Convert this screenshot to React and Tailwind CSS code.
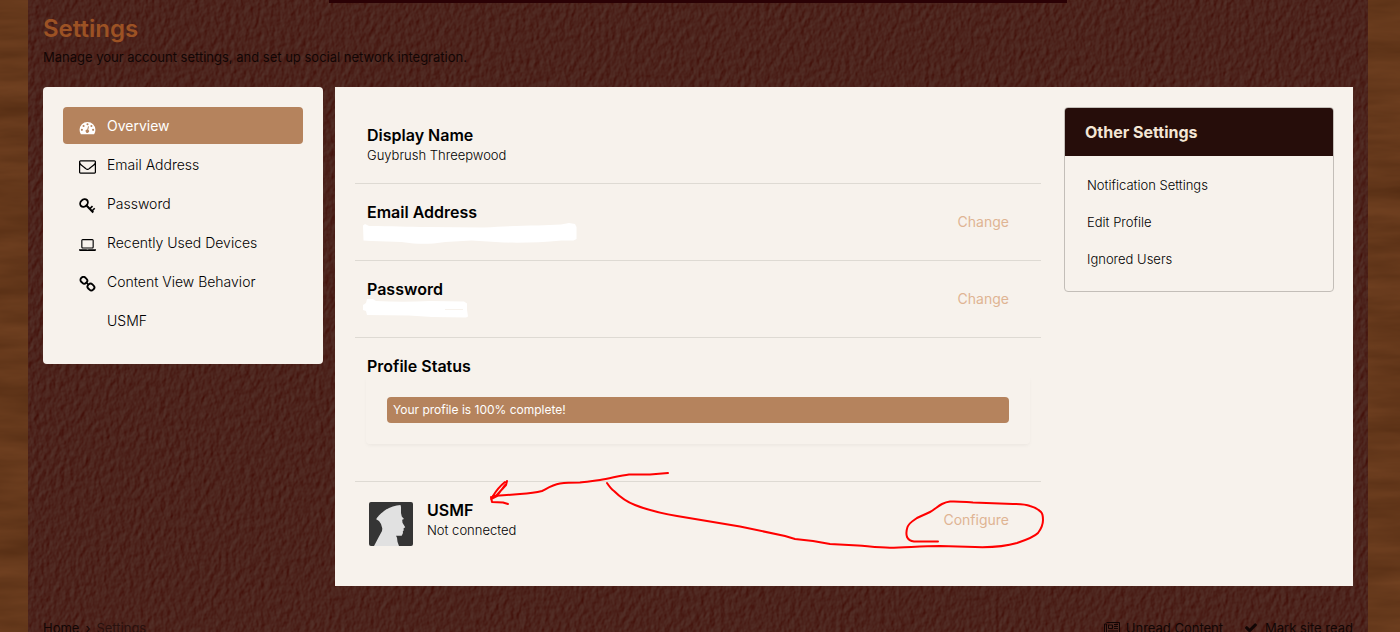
import clsx from 'clsx';

const DashboardIcon = () => (
  <svg viewBox="0 0 18 15" className="w-[17px] h-[14px]" fill="currentColor" fillRule="evenodd">
    <path d="M9 1a8.500 8.500 0 0 1 8.500 8.500c0 1.600-.5 3.200-1.300 4.500-.1.200-.3.300-.6.300H2.400c-.3 0-.5-.1-.6-.3A8.500 8.500 0 0 1 .5 9.500 8.500 8.500 0 0 1 9 1zM3 8.400a1.100 1.100 0 1 0 0 2.200 1.100 1.100 0 0 0 0-2.200zm1.800-4.200a1.100 1.100 0 1 0 0 2.200 1.100 1.100 0 0 0 0-2.200zM9 2.400a1.100 1.100 0 1 0 0 2.200 1.100 1.100 0 0 0 0-2.200zm4.200 1.800a1.100 1.100 0 1 0 0 2.200 1.100 1.100 0 0 0 0-2.200zM15 8.400a1.100 1.100 0 1 0 0 2.200 1.100 1.100 0 0 0 0-2.200zM9.500 5.900l-.8 3.200a1.800 1.800 0 1 0 1.100.3l.7-3.200a.5.5 0 0 0-1-.3z" />
  </svg>
);

const EnvelopeIcon = () => (
  <svg viewBox="0 256 1792 1408" className="w-[17px] h-[14px]" fill="currentColor">
    <path d="M1664 1504v-768q-32 36-69 66-268 206-426 338-51 43-83 67t-86.500 48.500-102.500 24.500h-2q-48 0-102.500-24.500t-86.500-48.500-83-67q-158-132-426-338-37-30-69-66v768q0 13 9.500 22.500t22.500 9.500h1472q13 0 22.500-9.500t9.500-22.500zm0-1051v-24.500l-.5-13-3-12.500-5.500-9-9-7.500-14-2.500h-1472q-13 0-22.500 9.500t-9.500 22.500q0 168 147 284 193 152 401 317 6 5 35 29.500t46 37.500 44.500 31.500 50.500 27.500 43 9h2q20 0 43-9t50.500-27.500 44.500-31.500 46-37.500 35-29.500q208-165 401-317 54-43 100.500-115.500t46.500-131.500zm128-37v1088q0 66-47 113t-113 47h-1472q-66 0-113-47t-47-113v-1088q0-66 47-113t113-47h1472q66 0 113 47t47 113z" />
  </svg>
);

const KeyIcon = () => (
  <svg viewBox="0 0 17 16" className="w-[17px] h-4" fill="none" stroke="currentColor">
    <ellipse cx="5" cy="5" rx="4.200" ry="3.400" strokeWidth="1.900" transform="rotate(-45 5 5)" />
    <path d="M7.500 7.500l6.800 7" strokeWidth="2" />
    <path d="M10.800 10.800l2.700-2.700M13 13l2.700-2.700" strokeWidth="1.600" />
  </svg>
);

const LaptopIcon = () => (
  <svg viewBox="0 128 1920 1280" className="w-[17px] h-3" fill="currentColor" preserveAspectRatio="none">
    <path d="M416 1152q-66 0-113-47t-47-113v-704q0-66 47-113t113-47h1088q66 0 113 47t47 113v704q0 66-47 113t-113 47h-1088zm-32-864v704q0 13 9.500 22.500t22.500 9.500h1088q13 0 22.500-9.500t9.500-22.500v-704q0-13-9.500-22.500t-22.500-9.500h-1088q-13 0-22.500 9.500t-9.500 22.500zm1376 928h160v96q0 40-47 68t-113 28h-1600q-66 0-113-28t-47-68v-96h1760zm-720 96q16 0 16-16t-16-16h-160q-16 0-16 16t16 16h160z" />
  </svg>
);

const ChainIcon = () => (
  <svg viewBox="0 0 17 16" className="w-[17px] h-4" fill="none" stroke="currentColor" strokeWidth="1.900">
    <rect x="1.400" y="1.400" width="6.900" height="5.800" rx="2.600" transform="rotate(45 4.900 4.300)" />
    <rect x="8.500" y="8.100" width="6.900" height="5.800" rx="2.600" transform="rotate(45 11.900 11)" />
    <path d="M6.800 6l3 3" strokeWidth="1.700" />
  </svg>
);

const NewspaperIcon = () => (
  <svg viewBox="0 0 16 12" className="w-4 h-3" fill="none" stroke="currentColor">
    <path d="M2.500 .5h13v11h-14q-1 0-1-1v-8.500h2v8.500q0 1-1 1" />
    <path d="M4.500 3h4v3.500h-4zM10 2.500h4M10 4.500h4M10 6.500h4M4 9h10" />
  </svg>
);

const CheckIcon = () => (
  <svg viewBox="121 343 1550 1200" className="w-3 h-[10px]" fill="currentColor">
    <path d="M1671 566q0 40-28 68l-724 724-136 136q-28 28-68 28t-68-28l-136-136-362-362q-28-28-28-68t28-68l136-136q28-28 68-28t68 28l294 295 656-657q28-28 68-28t68 28l136 136q28 28 28 68z" />
  </svg>
);

const SoldierAvatar = () => (
  <svg viewBox="0 0 44 44" className="w-11 h-11 rounded-xs shrink-0 mt-0.5" role="img" aria-label="USMF">
    <rect width="44" height="44" fill="#353535" />
    <path
      fill="#e1e1e1"
      d="M5 44L10 34.500 13 29l.3-2.500L12 22l-2-3-2.800-1.800C8 15.500 11 12 15 9c5-3.700 11-5.700 16.500-6l.5 2v6l.8 3.500L35 17l-1.800.8.3 3 2.700 4.400-1.700 1.300.3 1.800-1 1.200.2 1.500-1.300 2.800H27l1 2 .5 4 1.500 4.200z"
    />
  </svg>
);

// Procedural textures behind the page
const WoodTexture = () => (
  <svg className="absolute inset-0 w-full h-full" aria-hidden="true">
    <filter id="wood" x="0" y="0" width="100%" height="100%" colorInterpolationFilters="sRGB">
      <feTurbulence type="fractalNoise" baseFrequency="0.008 0.05" numOctaves="4" seed="8" />
      <feColorMatrix values="0.14 0 0 0 0.325  0.10 0 0 0 0.170  0.07 0 0 0 0.070  0 0 0 0 1" />
    </filter>
    <rect width="100%" height="100%" filter="url(#wood)" />
  </svg>
);

const LeatherTexture = () => (
  <svg className="absolute inset-0 w-full h-full" aria-hidden="true">
    <filter id="leather" x="0" y="0" width="100%" height="100%" colorInterpolationFilters="sRGB">
      <feTurbulence type="fractalNoise" baseFrequency="0.2 0.13" numOctaves="3" seed="5" result="grain" />
      <feDiffuseLighting in="grain" surfaceScale="0.9" lightingColor="#ffffff" result="lit">
        <feDistantLight azimuth="215" elevation="45" />
      </feDiffuseLighting>
      <feColorMatrix in="lit" values="0.14 0 0 0 0.200  0.28 0 0 0 -0.058  0.27 0 0 0 -0.080  0 0 0 0 1" />
    </filter>
    <rect width="100%" height="100%" filter="url(#leather)" />
  </svg>
);

const navItems = [
  { label: 'Overview', icon: DashboardIcon, active: true },
  { label: 'Email Address', icon: EnvelopeIcon },
  { label: 'Password', icon: KeyIcon },
  { label: 'Recently Used Devices', icon: LaptopIcon },
  { label: 'Content View Behavior', icon: ChainIcon },
  { label: 'USMF' },
];

const otherSettings = ['Notification Settings', 'Edit Profile', 'Ignored Users'];

const SideNav = () => (
  <nav className="w-[280px] shrink-0 rounded bg-[#f7f2ec] p-5 pb-[25px]">
    <ul className="flex flex-col gap-0.5">
      {navItems.map(({ label, icon: Icon, active }) => (
        <li key={label}>
          <a
            href="#"
            className={clsx(
              'flex h-[37px] items-center gap-[11px] rounded px-4 text-sm',
              active ? 'bg-[#b5835d] font-normal text-white' : 'text-black'
            )}
          >
            <span className="flex w-[17px] justify-center pt-1">{Icon && <Icon />}</span>
            {label}
          </a>
        </li>
      ))}
    </ul>
  </nav>
);

const SettingRow = ({ title, children, action }) => (
  <li className="flex justify-between border-b border-[#dedad3] px-3 py-[18px]">
    <div>
      <h3 className="text-base leading-5 font-semibold text-black">{title}</h3>
      {children}
    </div>
    {action && <button className="px-5 text-sm leading-10 font-normal text-[#dfb493]">{action}</button>}
  </li>
);

const Annotations = () => (
  <svg
    className="pointer-events-none absolute top-0 left-0 h-[499px] w-[720px]"
    viewBox="335 87 720 499"
    fill="none"
    stroke="#ff0000"
    strokeWidth="2"
    strokeLinecap="round"
    strokeLinejoin="round"
    aria-hidden="true"
  >
    <path d="M668 473l-18 1.500h-21c-9 1-19 4-29 5.500-7 1-14 1.500-20 2.500-9 0-15 .3-20 1-8 1.500-13 5-18 7.500-8 2-15 2.500-22 3l-27 2" />
    <path d="M507 481l-1 4-11 12M505 482c-5 4-9 9-12 14l-2 3 6-3 8-11M491 497l1 5 11 .5 5 1.500" />
    <path d="M607 483C609 486 611 489 614 491C620 497 627 502 635 505C647 510 660 513 677 516L740 526.500L785 536L795 539L813 541L830 544L858 545.500C870 546.500 880 547.800 890 547.800C905 547.800 920 546 940 546L975 547C990 547.500 1005 546.500 1017 543C1026 540 1034 537 1038 533C1041 529 1043 525 1043 520C1043 517 1043 514 1041 512C1038 509 1034 507 1030 506C1025 504 1019 504 1013 504L973 502.500C965 502 958 501 950 501.500C946 502 944 503 942 504C938 506 934 510 930 512C926 514 921 516 917 518C913 521 909 523 907.500 527C906.500 530 906 534 907 537C908 539 910 541 914 541.500H938" />
  </svg>
);

const AccountOverview = () => (
  <ul className="min-w-0 flex-1">
    <SettingRow title="Display Name">
      <p className="text-[13px] leading-5 text-black">Guybrush Threepwood</p>
    </SettingRow>
    <SettingRow title="Email Address" action="Change">
      <svg viewBox="0 0 210 20" className="h-5 w-[210px] overflow-visible" fill="#ffffff" aria-hidden="true">
        <path d="M-4 3.500l2-1.500 4 2c22 0 40 1 58 1l57 .5c20-1 36-2 54-2l23-1 8-1.500 6 1 1.500 3v12l-3 1.500h-12c-20 2-40 2.500-58 2l-32-2-26 1.500c-13 2-22 2-32 1.500l-12-1.500-30-1-8-.5z" />
      </svg>
    </SettingRow>
    <SettingRow title="Password" action="Change">
      <svg viewBox="0 0 100 20" className="h-5 w-[100px] overflow-visible" fill="#ffffff" aria-hidden="true">
        <path d="M-4 6l3-2 1-4 6 0 3 2c18 1 36 1 54 0l34 .5 3 2v6l1 7-2 1-34-.5-23-1.500-42-.5-1-4-3-1z" />
        <path d="M78 10.500h18" stroke="#f7f2ec" />
      </svg>
    </SettingRow>
    <li className="border-b border-[#dedad3] px-[11px] pt-[18px] pb-[37px]">
      <h3 className="px-px text-base leading-5 font-semibold text-black">Profile Status</h3>
      <div className="rounded border border-transparent p-5 shadow-[0_2px_4px_-1px_rgba(0,0,0,0.06)]">
        <div className="rounded bg-[#b5835d] px-1.5 text-xs leading-[26px] font-normal text-white">
          Your profile is 100% complete!
        </div>
      </div>
    </li>
    <li className="flex justify-between px-3 pt-[18px] pb-5">
      <div className="flex gap-3.5 pl-0.5">
        <SoldierAvatar />
        <div>
          <h3 className="text-base leading-5 font-semibold text-black">USMF</h3>
          <p className="text-[13px] leading-5 text-black">Not connected</p>
        </div>
      </div>
      <button className="h-10 px-5 text-sm leading-10 font-normal text-[#dfb493]">Configure</button>
    </li>
  </ul>
);

const OtherSettings = () => (
  <aside className="w-[270px] shrink-0 self-start overflow-hidden rounded border border-[#c3beb8]">
    <h2 className="bg-[#260d0a] px-5 text-base leading-[48px] font-bold text-[#f3e6d5]">Other Settings</h2>
    <ul className="px-[22px] pt-[11px] pb-[13px]">
      {otherSettings.map((label) => (
        <li key={label}>
          <a href="#" className="block text-[13px] leading-[37px] text-black">
            {label}
          </a>
        </li>
      ))}
    </ul>
  </aside>
);

const App = () => {
  return (
    <div className="relative min-h-screen overflow-hidden bg-[#63391c] pr-8 pl-7 font-['Inter','Liberation_Sans',sans-serif] font-light">
      <WoodTexture />
      <div className="relative min-h-screen bg-[#4a2019] px-[15px]">
        <LeatherTexture />
        <div className="relative">
          <div className="mx-auto h-[3px] w-[738px] max-w-full bg-[#2b0105]" />

          <header className="pt-2.5 pb-5">
            <h1 className="text-2xl leading-8 font-semibold text-[#9c5224]">Settings</h1>
            <p className="pt-0.5 text-[13px] leading-5 font-normal text-[#120605]">
              Manage your account settings, and set up social network integration.
            </p>
          </header>

          <div className="flex items-start gap-3">
            <SideNav />
            <main className="relative flex min-w-0 flex-1 gap-[23px] bg-[#f7f2ec] py-5 pr-[19px] pl-5">
              <AccountOverview />
              <OtherSettings />
              <Annotations />
            </main>
          </div>

          <footer className="flex items-center justify-between pt-8 pb-4 text-[13px] leading-5 font-normal">
            <div className="flex gap-1.5 text-[#120605]">
              <a href="#">Home</a>
              <span>›</span>
              <span className="text-[#29110e]">Settings</span>
            </div>
            <div className="flex gap-[22px] text-[#120605]">
              <a href="#" className="flex items-center gap-1.5">
                <NewspaperIcon />
                Unread Content
              </a>
              <a href="#" className="flex items-center gap-2">
                <CheckIcon />
                Mark site read
              </a>
            </div>
          </footer>
        </div>
      </div>
    </div>
  );
};

export default App;
